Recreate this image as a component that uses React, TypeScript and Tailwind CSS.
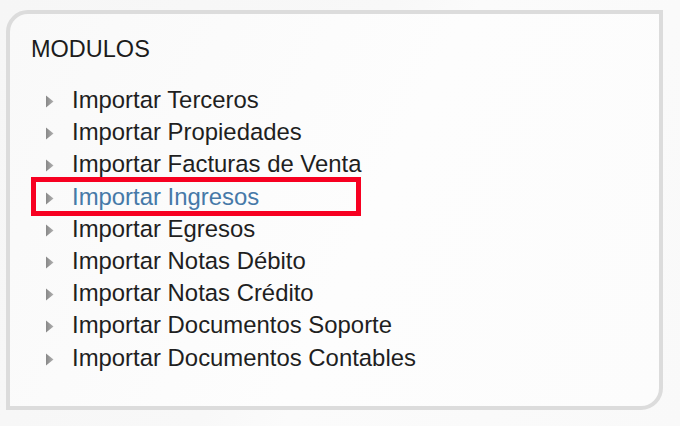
const modulos = [
  'Importar Terceros',
  'Importar Propiedades',
  'Importar Facturas de Venta',
  'Importar Ingresos',
  'Importar Egresos',
  'Importar Notas Débito',
  'Importar Notas Crédito',
  'Importar Documentos Soporte',
  'Importar Documentos Contables',
];

function Arrow() {
  return (
    <svg width="9" height="15" viewBox="0 0 9 15" className="shrink-0">
      <defs>
        <linearGradient id="arr" x1="0" y1="0" x2="1" y2="0">
          <stop offset="0" stopColor="#888888" />
          <stop offset="1" stopColor="#b0b0b0" />
        </linearGradient>
      </defs>
      <path d="M1 1.5 L8.5 7.5 L1 13.5 Z" fill="url(#arr)" />
    </svg>
  );
}

export default function App() {
  return (
    <div
      className="w-[680px] h-[426px] bg-[linear-gradient(115deg,#f6f6f6_0%,#f8f8f8_45%,#fbfbfb_55%,#f9f9f9_100%)] pt-[10px] pl-[6px]"
      style={{ fontFamily: '"Liberation Sans", Arial, sans-serif' }}
    >
      <div className="relative w-[657px] h-[400px] border-4 border-[#dcdcdc] rounded-tl-[22px] rounded-br-[22px] bg-[linear-gradient(115deg,#f9f9f9_0%,#fcfcfc_40%,#fdfdfd_55%,#fcfcfc_100%)] pt-[19px] pl-[21px]">
        <h2 className="text-[23.5px] leading-[32px] text-[#1c1c1c] font-normal">MODULOS</h2>

        <ul className="mt-[19px] pl-[14px] flex flex-col">
          {modulos.map((m) => (
            <li key={m} className="flex items-center gap-[18px] h-[32.2px] text-[23.9px] leading-[32px]">
              <span className="pt-[3px]">
                <Arrow />
              </span>
              <span className={m === 'Importar Ingresos' ? 'text-[#4679a8]' : 'text-[#1f1f1f]'}>{m}</span>
            </li>
          ))}
        </ul>

        {/* annotation box */}
        <div className="absolute left-[21px] top-[163px] w-[330px] h-[39px] border-[5px] border-[#f70021]" />
      </div>
    </div>
  );
}
